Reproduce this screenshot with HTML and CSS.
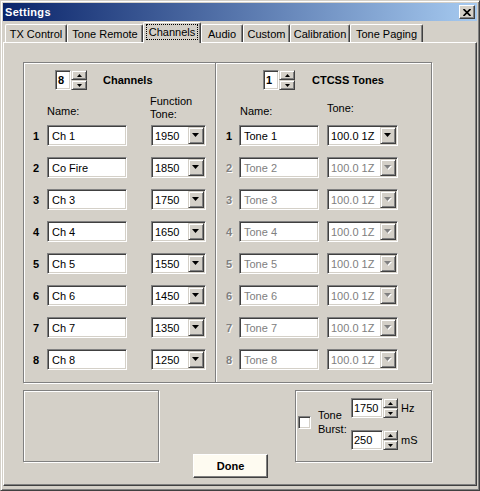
FILE: index.html
```html
<!DOCTYPE html>
<html lang="en">
<head>
<meta charset="UTF-8" />
<title>Settings</title>
<link rel="stylesheet" href="styles.css">
</head>
<body>
<div class="window">
    <div class="titlebar">
        <span class="title">Settings</span>
        <span class="close-btn">
            <svg width="8" height="7" viewBox="0 0 8 7"><path d="M0.5 0 L7.5 7 M7.5 0 L0.5 7" stroke="#000" stroke-width="1.7" fill="none"/></svg>
        </span>
    </div>

    <div class="tabs">
        <div class="tab tab-tx">TX Control</div>
        <div class="tab tab-remote">Tone Remote</div>
        <div class="tab tab-channels selected"><span class="focus">Channels</span></div>
        <div class="tab tab-audio">Audio</div>
        <div class="tab tab-custom">Custom</div>
        <div class="tab tab-calib">Calibration</div>
        <div class="tab tab-paging">Tone Paging</div>
    </div>

    <div class="panel">
        <div class="group etched">
            <!-- channels -->
            <div class="col col-channels">
                <div class="col-head">
                    <div class="spinner">
                        <div class="spin-value sunken bold">8</div>
                        <div class="spin-btns"><span class="spin-btn raised up"></span><span class="spin-btn raised down"></span></div>
                    </div>
                    <span class="head-title">Channels</span>
                </div>
                <div class="labels">
                    <span class="lbl-name">Name:</span>
                    <span class="lbl-func">Function<br>Tone:</span>
                </div>
                <div class="rows">
                    <div class="row"><span class="num">1</span><div class="field sunken">Ch 1</div><div class="combo sunken"><span class="combo-text">1950</span><span class="drop raised"></span></div></div>
                    <div class="row"><span class="num">2</span><div class="field sunken">Co Fire</div><div class="combo sunken"><span class="combo-text">1850</span><span class="drop raised"></span></div></div>
                    <div class="row"><span class="num">3</span><div class="field sunken">Ch 3</div><div class="combo sunken"><span class="combo-text">1750</span><span class="drop raised"></span></div></div>
                    <div class="row"><span class="num">4</span><div class="field sunken">Ch 4</div><div class="combo sunken"><span class="combo-text">1650</span><span class="drop raised"></span></div></div>
                    <div class="row"><span class="num">5</span><div class="field sunken">Ch 5</div><div class="combo sunken"><span class="combo-text">1550</span><span class="drop raised"></span></div></div>
                    <div class="row"><span class="num">6</span><div class="field sunken">Ch 6</div><div class="combo sunken"><span class="combo-text">1450</span><span class="drop raised"></span></div></div>
                    <div class="row"><span class="num">7</span><div class="field sunken">Ch 7</div><div class="combo sunken"><span class="combo-text">1350</span><span class="drop raised"></span></div></div>
                    <div class="row"><span class="num">8</span><div class="field sunken">Ch 8</div><div class="combo sunken"><span class="combo-text">1250</span><span class="drop raised"></span></div></div>
                </div>
            </div>

            <!-- ctcss tones -->
            <div class="col col-tones">
                <div class="col-head">
                    <div class="spinner">
                        <div class="spin-value sunken bold">1</div>
                        <div class="spin-btns"><span class="spin-btn raised up"></span><span class="spin-btn raised down"></span></div>
                    </div>
                    <span class="head-title">CTCSS Tones</span>
                </div>
                <div class="labels">
                    <span class="lbl-name">Name:</span>
                    <span class="lbl-tone">Tone:</span>
                </div>
                <div class="rows">
                    <div class="row"><span class="num">1</span><div class="field sunken">Tone 1</div><div class="combo sunken"><span class="combo-text">100.0 1Z</span><span class="drop raised"></span></div></div>
                    <div class="row disabled"><span class="num">2</span><div class="field sunken">Tone 2</div><div class="combo sunken"><span class="combo-text">100.0 1Z</span><span class="drop raised"></span></div></div>
                    <div class="row disabled"><span class="num">3</span><div class="field sunken">Tone 3</div><div class="combo sunken"><span class="combo-text">100.0 1Z</span><span class="drop raised"></span></div></div>
                    <div class="row disabled"><span class="num">4</span><div class="field sunken">Tone 4</div><div class="combo sunken"><span class="combo-text">100.0 1Z</span><span class="drop raised"></span></div></div>
                    <div class="row disabled"><span class="num">5</span><div class="field sunken">Tone 5</div><div class="combo sunken"><span class="combo-text">100.0 1Z</span><span class="drop raised"></span></div></div>
                    <div class="row disabled"><span class="num">6</span><div class="field sunken">Tone 6</div><div class="combo sunken"><span class="combo-text">100.0 1Z</span><span class="drop raised"></span></div></div>
                    <div class="row disabled"><span class="num">7</span><div class="field sunken">Tone 7</div><div class="combo sunken"><span class="combo-text">100.0 1Z</span><span class="drop raised"></span></div></div>
                    <div class="row disabled"><span class="num">8</span><div class="field sunken">Tone 8</div><div class="combo sunken"><span class="combo-text">100.0 1Z</span><span class="drop raised"></span></div></div>
                </div>
            </div>
        </div>

        <div class="bottom">
            <div class="etched blank-box"></div>
            <button class="done">Done</button>
            <div class="etched burst-box">
                <span class="check sunken"></span>
                <span class="burst-label">Tone<br>Burst:</span>
                <div class="burst-spins">
                    <div class="burst-row">
                        <div class="spinner">
                            <div class="spin-value sunken">1750</div>
                            <div class="spin-btns"><span class="spin-btn raised up"></span><span class="spin-btn raised down"></span></div>
                        </div>
                        <span class="unit">Hz</span>
                    </div>
                    <div class="burst-row">
                        <div class="spinner">
                            <div class="spin-value sunken">250</div>
                            <div class="spin-btns"><span class="spin-btn raised up"></span><span class="spin-btn raised down"></span></div>
                        </div>
                        <span class="unit">mS</span>
                    </div>
                </div>
            </div>
        </div>
    </div>
</div>
</body>
</html>
```

FILE: styles.css
```css
body {
    margin: 0;
    font-family: "Liberation Sans", Arial, sans-serif;
    font-size: 11px;
    color: #000;
    background: #D4D0C8;
}

.bold {
    font-weight: bold;
}

/* Window frame */
.window {
    width: 480px;
    height: 491px;
    box-sizing: border-box;
    border: 1px solid;
    border-color: #D4D0C8 #404040 #404040 #D4D0C8;
    box-shadow: inset 1px 1px #fff, inset -1px -1px #808080;
    padding: 2px;
    background: #D4D0C8;
    display: flex;
    flex-direction: column;
}

.titlebar {
    height: 18px;
    flex-shrink: 0;
    display: flex;
    align-items: center;
    justify-content: space-between;
    padding: 0 2px;
    background: linear-gradient(to right, #0A246A, #A6CAF0);
    color: #fff;
    font-weight: bold;
    letter-spacing: 0.3px;
}

.close-btn {
    width: 16px;
    height: 14px;
    box-sizing: border-box;
    border: 1px solid;
    border-color: #fff #404040 #404040 #fff;
    box-shadow: inset -1px -1px #808080;
    background: #D4D0C8;
    display: flex;
    align-items: center;
    justify-content: center;
}

/* Tabs */
.tabs {
    display: flex;
    align-items: flex-end;
    height: 20px;
    flex-shrink: 0;
    margin-top: 1px;
    padding-left: 2px;
}

.tab {
    height: 18px;
    box-sizing: border-box;
    border: 1px solid;
    border-bottom: none;
    border-color: #fff #404040 transparent #fff;
    box-shadow: inset -1px 0 #808080;
    border-radius: 2px 2px 0 0;
    display: flex;
    align-items: center;
    justify-content: center;
    white-space: nowrap;
}

.tab-tx { width: 62px; }
.tab-remote { width: 76px; }
.tab-channels { width: 58px; }
.tab-audio { width: 42px; }
.tab-custom { width: 47px; }
.tab-calib { width: 60px; }
.tab-paging { width: 73px; }

.tab.selected {
    height: 21px;
    margin-bottom: -1px;
    position: relative;
    z-index: 1;
    background: #D4D0C8;
    padding: 1px 2px 3px 2px;
    align-items: stretch;
}

.focus {
    flex: 1;
    border: 1px dotted #000;
    display: flex;
    align-items: center;
    justify-content: center;
}

.panel {
    flex: 1;
    margin-bottom: 2px;
    border: 1px solid;
    border-color: #fff #404040 #404040 #fff;
    box-shadow: inset -1px -1px #808080;
    padding: 19px 0 0 19px;
}

/* 3D helpers */
.etched {
    box-sizing: border-box;
    border: 1px solid #808080;
    box-shadow: inset 1px 1px #fff, 1px 1px #fff;
}

.sunken {
    box-sizing: border-box;
    background: #fff;
    border: 1px solid;
    border-color: #808080 #fff #fff #808080;
    box-shadow: inset 1px 1px #404040, inset -1px -1px #D4D0C8;
}

.raised {
    box-sizing: border-box;
    background: #D4D0C8;
    border: 1px solid;
    border-color: #D4D0C8 #404040 #404040 #D4D0C8;
    box-shadow: inset 1px 1px #fff, inset -1px -1px #808080;
}

/* Group box */
.group {
    width: 409px;
    height: 321px;
    display: flex;
}

.col-channels {
    width: 192px;
    box-sizing: border-box;
    border-right: 1px solid #808080;
    box-shadow: 1px 0 #fff;
}

.col-tones {
    flex: 1;
}

.col-head {
    display: flex;
    align-items: center;
    height: 20px;
    padding-top: 7px;
}

.col-channels .col-head {
    padding-left: 31px;
    gap: 16px;
}

.col-tones .col-head {
    padding-left: 47px;
    gap: 17px;
}

.head-title {
    font-weight: bold;
}

/* Spinner */
.spinner {
    display: flex;
}

.spin-value {
    width: 16px;
    height: 20px;
    display: flex;
    align-items: center;
    padding-left: 2px;
}

.spin-btns {
    display: flex;
    flex-direction: column;
    width: 16px;
}

.spin-btn {
    flex: 1;
    position: relative;
}

.spin-btn::after {
    content: "";
    position: absolute;
    left: 5px;
    top: 3px;
    width: 5px;
    height: 3px;
    background: #000;
}

.spin-btn.up::after {
    clip-path: polygon(50% 0, 100% 100%, 0 100%);
}

.spin-btn.down::after {
    clip-path: polygon(0 0, 100% 0, 50% 100%);
}

/* Labels */
.labels {
    display: flex;
    align-items: flex-end;
    height: 31px;
    padding-bottom: 4px;
    line-height: 13px;
}

.col-channels .labels { padding-left: 23px; }
.col-tones .labels { padding-left: 24px; }

.lbl-name { margin-bottom: 3px; }
.col-channels .lbl-name { width: 103px; }
.col-tones .lbl-name { width: 87px; }
.lbl-tone { margin-bottom: 6px; }

/* Rows */
.rows {
    display: flex;
    flex-direction: column;
    gap: 11px;
}

.row {
    display: flex;
    align-items: center;
    height: 21px;
}

.col-channels .row { padding-left: 9px; }
.col-tones .row { padding-left: 10px; }

.num {
    font-weight: bold;
    width: 14px;
}

.col-tones .num { width: 13px; }

.field {
    width: 80px;
    height: 21px;
    padding-left: 4px;
    display: flex;
    align-items: center;
    white-space: nowrap;
}

.combo {
    height: 21px;
    padding: 1px;
    display: flex;
    align-items: center;
    justify-content: space-between;
}

.col-channels .combo {
    width: 55px;
    margin-left: 24px;
}

.col-tones .combo {
    width: 71px;
    margin-left: 8px;
}

.combo-text {
    padding-left: 2px;
    white-space: nowrap;
}

.drop {
    width: 16px;
    height: 17px;
    flex-shrink: 0;
    position: relative;
}

.drop::before,
.drop::after {
    content: "";
    position: absolute;
    left: 3px;
    top: 5px;
    width: 7px;
    height: 4px;
    clip-path: polygon(0 0, 100% 0, 50% 100%);
}

.drop::after {
    background: #000;
}

/* Disabled rows */
.disabled {
    color: #808080;
}

.disabled .num {
    text-shadow: 1px 1px #fff;
}

.disabled .drop::before {
    left: 4px;
    top: 6px;
    background: #fff;
}

.disabled .drop::after {
    background: #808080;
}

/* Bottom area */
.bottom {
    display: flex;
    align-items: flex-start;
    height: 88px;
    margin-top: 7px;
}

.blank-box {
    width: 136px;
    height: 72px;
}

.done {
    width: 75px;
    height: 24px;
    margin-left: 34px;
    align-self: flex-end;
    padding: 0;
    font-family: "Liberation Sans", Arial, sans-serif;
    font-size: 11px;
    font-weight: bold;
    color: #000;
    background: #FEFBF1;
    border: 1px solid;
    border-color: #fff #404040 #404040 #fff;
    box-shadow: inset -1px -1px #808080;
}

.burst-box {
    width: 137px;
    height: 72px;
    margin-left: 27px;
    display: flex;
    align-items: flex-start;
    padding: 7px 0 0 2px;
}

.check {
    width: 13px;
    height: 13px;
    margin-top: 18px;
}

.burst-label {
    width: 33px;
    margin-left: 7px;
    margin-top: 10px;
    line-height: 14px;
}

.burst-spins {
    display: flex;
    flex-direction: column;
    gap: 12px;
}

.burst-row {
    display: flex;
    align-items: center;
    gap: 3px;
}

.burst-row .spin-value {
    width: 32px;
}

.burst-row .spin-btns {
    width: 15px;
}

.burst-row .spin-btn::after {
    left: 4px;
}
```
